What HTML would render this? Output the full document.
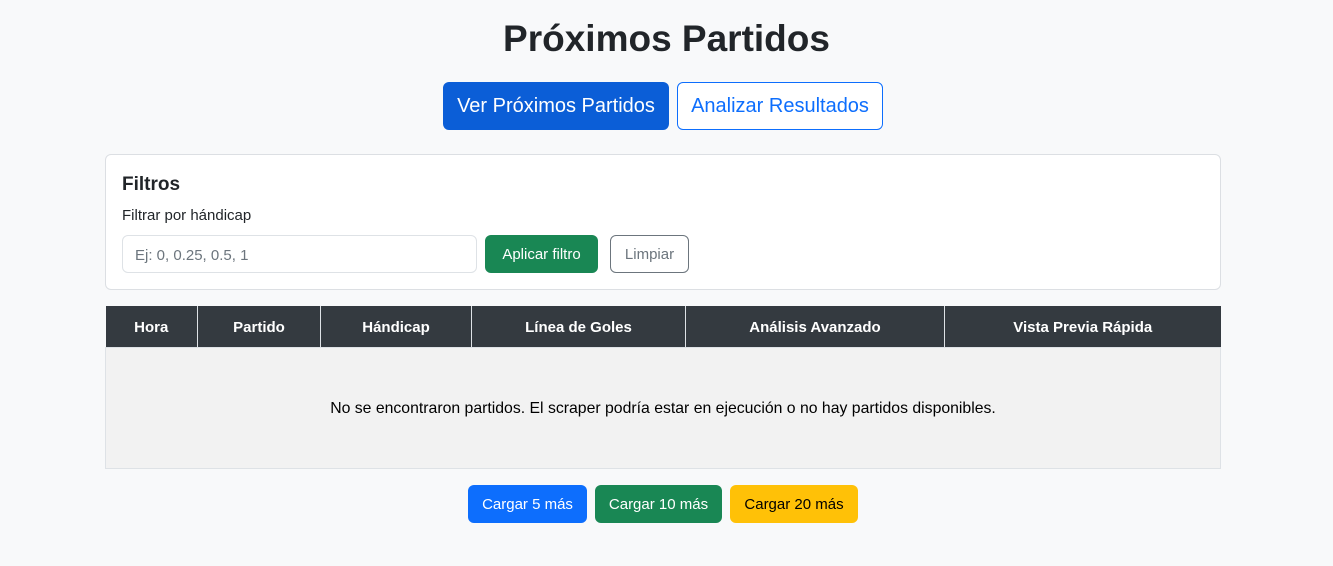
<!DOCTYPE html>
<html><head><meta charset="utf-8"><style>
*{box-sizing:border-box;margin:0;padding:0}
body{width:1333px;height:566px;background:#f8f9fa;font-family:"Liberation Sans",sans-serif;color:#212529;position:relative;overflow:hidden}
.abs{position:absolute}
h1{position:absolute;left:0;width:1333px;top:16px;text-align:center;font-size:37px;font-weight:bold;line-height:46px}
.btn{position:absolute;border-radius:6px;display:flex;align-items:center;justify-content:center;font-size:15px;padding-top:1px}
.card{position:absolute;left:105px;top:154px;width:1116px;height:136px;background:#fff;border:1px solid #dcdfe3;border-radius:6px}
table{position:absolute;left:105px;top:306px;width:1116px;border-collapse:collapse}
th{background:#343a40;color:#fff;font-size:15px;height:41px;border-right:1px solid #dee2e6;font-weight:bold;padding-top:2px}
th:last-child{border-right:none}
td{background:#f2f2f2;height:121px;text-align:center;font-size:15.8px;color:#000;border:1px solid #dee2e6;padding-top:2px}
</style></head><body>
<h1>Próximos Partidos</h1>
<div class="btn" style="left:443px;top:82px;width:226px;height:48px;background:#0b5ed7;color:#fff;font-size:20px">Ver Próximos Partidos</div>
<div class="btn" style="left:677px;top:82px;width:206px;height:48px;border:1px solid #0d6efd;color:#0d6efd;font-size:20px;background:#fff">Analizar Resultados</div>
<div class="card">
<div class="abs" style="left:16px;top:19px;font-size:19px;font-weight:bold">Filtros</div>
<div class="abs" style="left:16px;top:52px;font-size:15px">Filtrar por hándicap</div>
<div class="abs" style="left:16px;top:80px;width:355px;height:38px;border:1px solid #dee2e6;border-radius:6px;padding:11px 12px;font-size:15px;color:#6c757d">Ej: 0, 0.25, 0.5, 1</div>
<div class="btn" style="left:379px;top:80px;width:113px;height:38px;background:#198754;color:#fff">Aplicar filtro</div>
<div class="btn" style="left:504px;top:80px;width:79px;height:38px;border:1px solid #6c757d;color:#6c757d">Limpiar</div>
</div>
<table><tr><th style="width:92px">Hora</th><th style="width:123px">Partido</th><th style="width:151px">Hándicap</th><th style="width:214px">Línea de Goles</th><th style="width:259px">Análisis Avanzado</th><th>Vista Previa Rápida</th></tr>
<tr><td colspan="6">No se encontraron partidos. El scraper podría estar en ejecución o no hay partidos disponibles.</td></tr></table>
<div class="btn" style="left:468px;top:485px;width:119px;height:38px;background:#0d6efd;color:#fff">Cargar 5 más</div>
<div class="btn" style="left:595px;top:485px;width:127px;height:38px;background:#198754;color:#fff">Cargar 10 más</div>
<div class="btn" style="left:730px;top:485px;width:128px;height:38px;background:#ffc107;color:#000">Cargar 20 más</div>
</body></html>
